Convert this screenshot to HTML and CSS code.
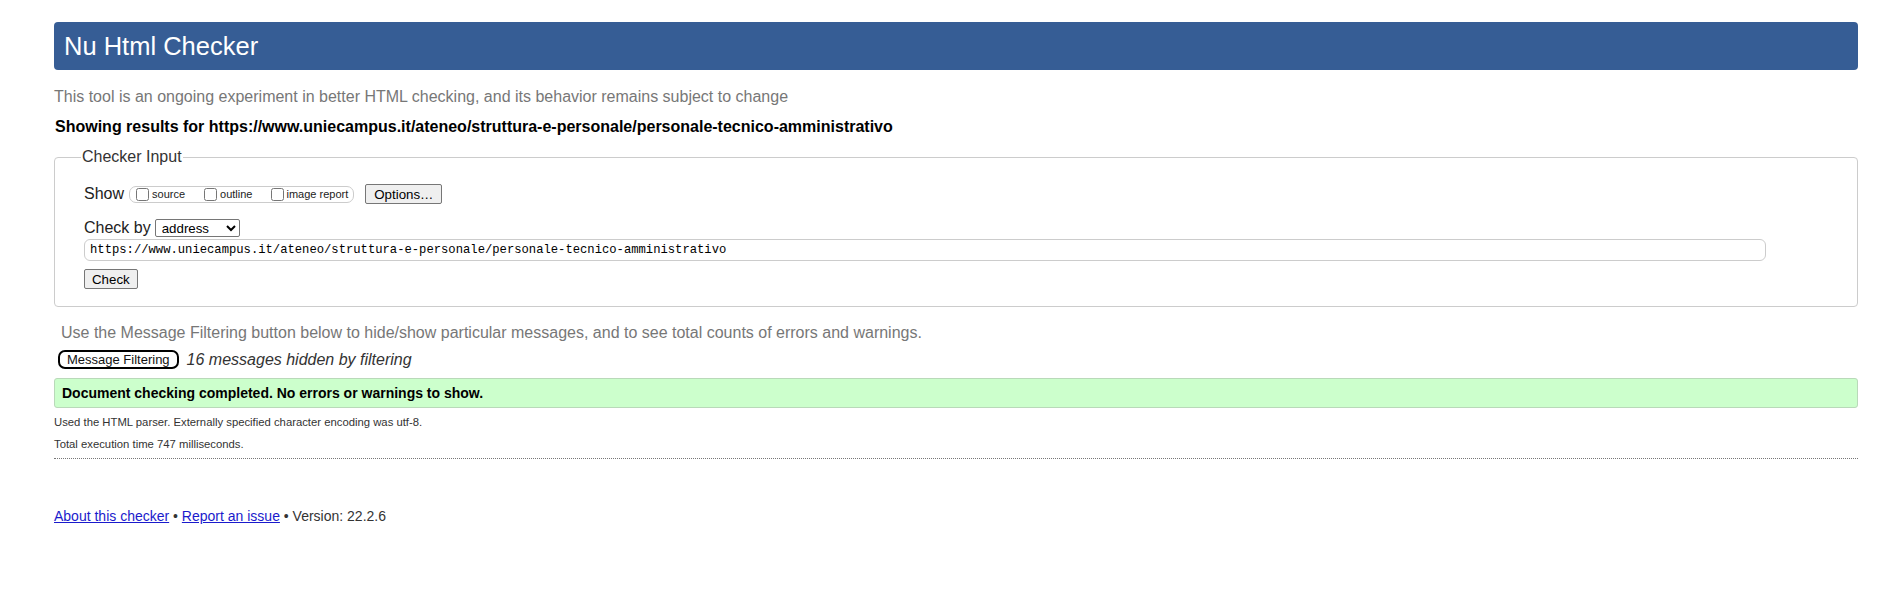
FILE: index.html
```html
<!DOCTYPE html>
<html lang="en">
<head>
    <meta charset="UTF-8">
    <meta name="viewport" content="width=device-width, initial-scale=1.0">
    <link rel="stylesheet" href="styles.css">
    <title>Nu Html Checker</title>
</head>
<body>
    <h1 class="title">Nu Html Checker</h1>
    <p class="intro">This tool is an ongoing experiment in better HTML checking, and its behavior remains subject to change</p>
    <p class="showing">Showing results for https://www.uniecampus.it/ateneo/struttura-e-personale/personale-tecnico-amministrativo</p>

    <form class="checker">
        <fieldset class="input-box">
            <legend>Checker Input</legend>
            <div class="row">
                <span class="row-label">Show</span>
                <span class="opts">
                    <label class="opt"><input type="checkbox">source</label>
                    <label class="opt"><input type="checkbox">outline</label>
                    <label class="opt"><input type="checkbox">image report</label>
                </span>
                <button type="button" class="btn options-btn">Options…</button>
            </div>
            <div class="row by-row">
                <span class="row-label">Check by</span>
                <select class="by">
                    <option>address</option>
                </select>
            </div>
            <input class="url" type="text" value="https://www.uniecampus.it/ateneo/struttura-e-personale/personale-tecnico-amministrativo">
            <div class="row submit-row">
                <button type="button" class="btn">Check</button>
            </div>
        </fieldset>
    </form>

    <p class="hint">Use the Message Filtering button below to hide/show particular messages, and to see total counts of errors and warnings.</p>
    <div class="filter-row">
        <button type="button" class="filter-btn">Message Filtering</button>
        <span class="hidden-count">16 messages hidden by filtering</span>
    </div>

    <p class="success">Document checking completed. No errors or warnings to show.</p>
    <p class="details">Used the HTML parser. Externally specified character encoding was utf-8.</p>
    <p class="details">Total execution time 747 milliseconds.</p>
    <hr class="sep">

    <p class="footer">
        <a href="#">About this checker</a> • <a href="#">Report an issue</a> • Version: 22.2.6
    </p>
</body>
</html>
```
FILE: styles.css
```css
body {
    margin: 0;
    padding: 22px 42px 0 54px;
    font-family: "Liberation Sans", Arial, sans-serif;
    color: #000;
    background: #fff;
}

.title {
    margin: 0;
    height: 48px;
    line-height: 48px;
    padding: 0 10px;
    background-color: #365d95;
    color: #fff;
    font-size: 25.5px;
    font-weight: normal;
    border-radius: 4px;
}

.intro {
    margin: 18px 0 0;
    font-size: 16px;
    line-height: 18px;
    color: #777;
}

.showing {
    margin: 12px 0 0 1px;
    font-size: 16px;
    line-height: 18px;
    font-weight: bold;
}

.checker {
    margin: 12px 0 0;
}

.input-box {
    margin: 0;
    padding: 18px 29px 17px;
    border: 1px solid #ccc;
    border-radius: 4px;
    min-width: 0;
}

.input-box legend {
    margin-left: -3px;
    padding: 0 1px;
    font-size: 16px;
    line-height: 18px;
    color: #333;
}

.row {
    display: flex;
    align-items: center;
    height: 20px;
}

.row-label {
    font-size: 16px;
    color: #222;
}

.opts {
    display: flex;
    align-items: center;
    height: 17px;
    box-sizing: border-box;
    margin-left: 5px;
    padding: 0 5px 0 0;
    border: 1px solid #ccc;
    border-radius: 7px;
}

.opt {
    display: flex;
    align-items: center;
    font-size: 11px;
    color: #222;
    margin-right: 19px;
}

.opt:last-child {
    margin-right: 0;
}

.opt input {
    width: 13px;
    height: 13px;
    margin: 0 3px 0 6px;
}

.opt:nth-child(2) input,
.opt:nth-child(3) input {
    margin-left: 0;
}

.opt:nth-child(3) input {
    margin-right: 2px;
}

.btn {
    height: 20px;
    padding: 0 7px;
    font-family: "Liberation Sans", Arial, sans-serif;
    font-size: 13.3px;
    color: #000;
    background: #efefef;
    border: 1px solid #767676;
    border-radius: 2px;
}

.options-btn {
    margin-left: 11px;
    padding: 0 8px;
}

.by-row {
    margin-top: 14px;
}

.by {
    margin-left: 4px;
    width: 85px;
    height: 18px;
    padding: 0 2px;
    font-family: "Liberation Sans", Arial, sans-serif;
    font-size: 13.3px;
    color: #000;
    border: 1px solid #767676;
    border-radius: 2px;
    background: #fff;
}

.url {
    display: block;
    box-sizing: border-box;
    margin-top: 1px;
    width: 1682px;
    height: 22px;
    padding: 0 5px;
    font-family: "Liberation Mono", Consolas, monospace;
    font-size: 12.2px;
    color: #000;
    border: 1px solid #ccc;
    border-radius: 6px;
}

.submit-row {
    margin-top: 8px;
}

.hint {
    margin: 17px 0 0 7px;
    font-size: 16px;
    line-height: 18px;
    color: #777;
}

.filter-row {
    display: flex;
    align-items: center;
    margin: 8px 0 0 4px;
}

.filter-btn {
    height: 19px;
    padding: 0 7px;
    font-family: "Liberation Sans", Arial, sans-serif;
    font-size: 13px;
    color: #111;
    background: #fff;
    border: 2px solid #000;
    border-radius: 7px;
}

.hidden-count {
    margin-left: 8px;
    font-size: 16px;
    font-style: italic;
    color: #333;
}

.success {
    margin: 9px 0 0;
    height: 30px;
    box-sizing: border-box;
    padding: 0 7px;
    line-height: 28px;
    font-size: 14px;
    font-weight: bold;
    background: #ccffcc;
    border: 1px solid #b9d9b9;
    border-radius: 3px;
}

.details {
    margin: 8px 0 0;
    font-size: 11.3px;
    line-height: 13px;
    color: #333;
}

.details + .details {
    margin-top: 9px;
}

.sep {
    margin: 7px 0 0;
    height: 0;
    border: 0;
    border-top: 1px dotted #777;
}

.footer {
    margin: 50px 0 0;
    font-size: 14px;
    line-height: 15px;
    color: #333;
}

.footer a {
    color: #1a1acc;
}
```
